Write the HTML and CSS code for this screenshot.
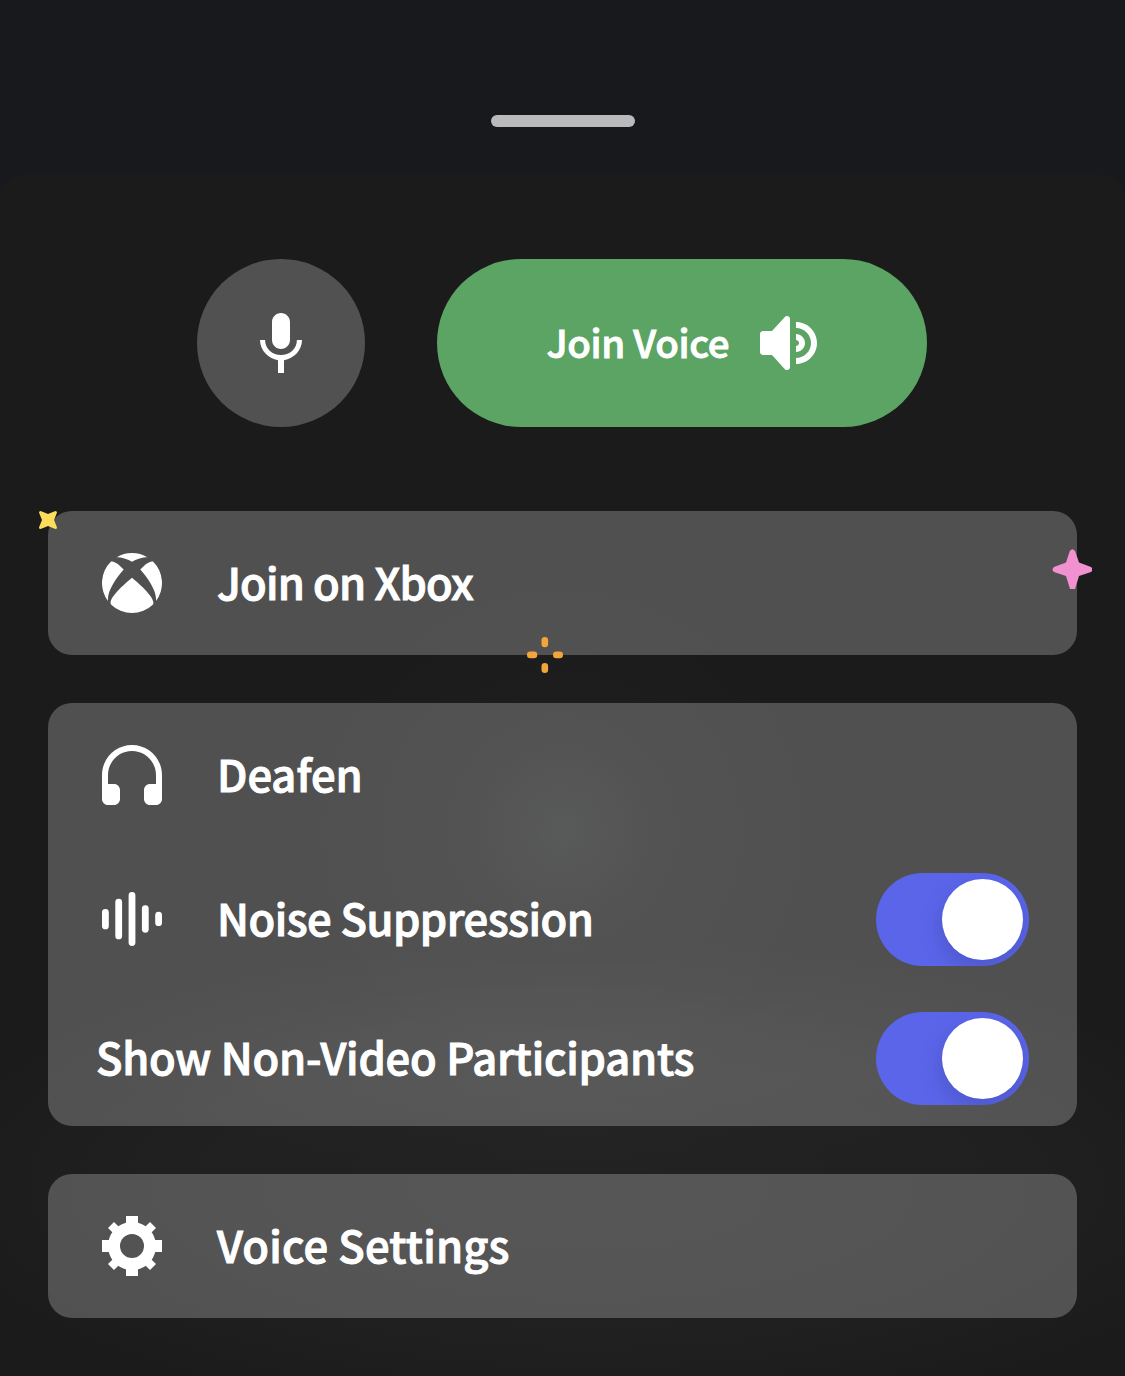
FILE: index.html
```html
<!DOCTYPE html>
<html lang="en">
<head>
<meta charset="utf-8">
<title>Voice</title>
<link rel="stylesheet" href="styles.css">
</head>
<body>
<div class="grabber-area"><div class="grabber"></div></div>
<main class="sheet">
  <div class="actions">
    <button class="mic" aria-label="Mute">
      <svg class="icon" viewBox="0 0 24 24"><path d="M12 14c1.66 0 3-1.34 3-3V5c0-1.66-1.34-3-3-3S9 3.340 9 5v6c0 1.660 1.340 3 3 3zm5.300-3c0 3-2.540 5-5.300 5S6.700 14 6.700 11H5c0 3.410 2.720 6.230 6 6.720V22h2v-4.280c3.280-.48 6-3.300 6-6.720h-1.700z"/></svg>
    </button>
    <button class="join">
      <span class="join-label">Join Voice</span>
      <svg class="icon" viewBox="0 0 24 24"><path d="M11.383 3.079C11.009 2.925 10.579 3.010 10.293 3.296L6 8.002H3C2.450 8.002 2 8.453 2 9.002V15.002C2 15.552 2.450 16.002 3 16.002H6L10.293 20.710C10.579 20.996 11.009 21.082 11.383 20.927C11.757 20.772 12 20.407 12 20.002V4.002C12 3.599 11.757 3.232 11.383 3.079ZM14 5.002V7.002C16.757 7.002 19 9.246 19 12.002C19 14.759 16.757 17.002 14 17.002V19.002C17.860 19.002 21 15.863 21 12.002C21 8.143 17.860 5.002 14 5.002ZM14 9.002C15.654 9.002 17 10.349 17 12.002C17 13.657 15.654 15.002 14 15.002V13.002C14.551 13.002 15 12.553 15 12.002C15 11.451 14.551 11.002 14 11.002V9.002Z"/></svg>
    </button>
  </div>

  <section class="card promo">
    <div class="row">
      <svg class="icon" viewBox="-6 -6 72 72"><path d="M14.300 4.400A30 30 0 0 1 45.700 4.400C41 3.500 35 6 30 8.700C25 6 19 3.500 14.300 4.400ZM9 8.600C12 7.500 17 11.500 21.700 16.400C14 25 5 38 6 48A30 30 0 0 1 9 8.600ZM51 8.600C48 7.500 43 11.500 38.300 16.400C46 25 55 38 54 48A30 30 0 0 0 51 8.600ZM30 24.700C40 33 54 46 51 51.400A30 30 0 0 1 9 51.400C6 46 20 33 30 24.700Z"/></svg>
      <span class="label t-xbox">Join on Xbox</span>
    </div>
    <svg class="spark spark-yellow" viewBox="0 0 18 18"><path d="M1.500 0Q5.500 1.500 9 3Q12.500 1.500 16.500 0Q18 0 18 1.500Q16.500 5.500 15 9Q16.500 12.500 18 16.500Q18 18 16.500 18Q12.500 16.500 9 15Q5.500 16.500 1.500 18Q0 18 0 16.500Q1.500 12.500 3 9Q1.500 5.500 0 1.500Q0 0 1.500 0Z"/></svg>
    <svg class="spark spark-pink" viewBox="0 0 40 40"><path d="M17.800 2Q20.500-1.600 23 2L27 13.500L39 18Q42 20.500 39 23L27 27L23 40H18L14 27L2 23Q-1 20.500 2 18L14 13.500Z"/></svg>
    <svg class="spark spark-orange" viewBox="0 0 36 36"><rect x="14.500" y="0" width="6.600" height="10.300" rx="3.300"/><rect x="14.500" y="26" width="6.600" height="10" rx="3.300"/><rect x="0" y="14.600" width="10.300" height="6.600" rx="3.300"/><rect x="26" y="14.600" width="10" height="6.600" rx="3.300"/></svg>
  </section>

  <section class="card">
    <div class="row">
      <svg class="icon" viewBox="0 0 24 24"><path d="M12 2C6.486 2 2 6.485 2 12V20C2 21.104 2.895 22 4 22H6C7.104 22 8 21.104 8 20V17C8 15.896 7.104 15 6 15H4V12C4 7.588 7.589 4 12 4C16.411 4 20 7.588 20 12V15H18C16.896 15 16 15.896 16 17V20C16 21.104 16.896 22 18 22H20C21.104 22 22 21.104 22 20V12C22 6.485 17.514 2 12 2Z"/></svg>
      <span class="label t-deafen">Deafen</span>
    </div>
    <div class="row">
      <svg class="icon" viewBox="0 0 72 72"><rect x="6" y="26" width="6.800" height="20.300" rx="3.400"/><rect x="19.300" y="15.700" width="6.800" height="40.600" rx="3.400"/><rect x="32.600" y="9" width="6.800" height="54" rx="3.400"/><rect x="45.900" y="22.300" width="6.800" height="27.400" rx="3.400"/><rect x="59.200" y="28.800" width="6.800" height="14.300" rx="3.400"/></svg>
      <span class="label t-noise">Noise Suppression</span>
      <span class="toggle"><span class="knob"></span></span>
    </div>
    <div class="row row-short">
      <span class="label t-show">Show Non-Video Participants</span>
      <span class="toggle"><span class="knob"></span></span>
    </div>
  </section>

  <section class="card">
    <div class="row">
      <svg class="icon" viewBox="0 0 24 24"><path fill-rule="evenodd" d="M19.738 10H22V14H19.739C19.498 14.931 19.100 15.798 18.565 16.564L20 18L18 20L16.565 18.564C15.797 19.099 14.932 19.498 14 19.738V22H10V19.738C9.069 19.498 8.203 19.099 7.436 18.564L6 20L4 18L5.436 16.564C4.901 15.799 4.502 14.932 4.262 14H2V10H4.262C4.502 9.068 4.900 8.202 5.436 7.436L4 6L6 4L7.436 5.436C8.202 4.900 9.068 4.502 10 4.262V2H14V4.261C14.932 4.502 15.797 4.900 16.565 5.435L18 3.999L20 5.999L18.564 7.436C19.099 8.202 19.498 9.069 19.738 10ZM12 16A4 4 0 1 0 12 8A4 4 0 1 0 12 16Z"/></svg>
      <span class="label t-settings">Voice Settings</span>
    </div>
  </section>
</main>
</body>
</html>
```
FILE: styles.css
```css
* { box-sizing: border-box; }

body {
  margin: 0;
  width: 1125px;
  height: 1376px;
  display: flex;
  flex-direction: column;
  overflow: hidden;
  background: #18191c;
  color: #fff;
  font-family: "Noto Sans CJK SC", "Noto Sans", sans-serif;
  font-weight: 500;
}

.grabber-area {
  height: 175px;
  padding-top: 115px;
  display: flex;
  justify-content: center;
}

.grabber {
  width: 144px;
  height: 12px;
  border-radius: 6px;
  background: #bababc;
}

.sheet {
  flex: 1;
  display: flex;
  flex-direction: column;
  gap: 48px;
  padding: 84px 48px 0;
  border-radius: 24px 24px 0 0;
  background:
    radial-gradient(circle 120px at 562px 655px, rgba(225, 235, 255, 0.035), rgba(225, 235, 255, 0) 100%),
    radial-gradient(circle 270px at 562px 655px, rgba(215, 235, 255, 0.02), rgba(215, 235, 255, 0) 100%),
    radial-gradient(ellipse 480px 110px at 562px 890px, rgba(245, 250, 255, 0.025), rgba(245, 250, 255, 0) 100%),
    radial-gradient(ellipse 700px 250px at 590px 1010px, rgba(235, 245, 255, 0.035), rgba(235, 245, 255, 0.022) 60%, rgba(235, 245, 255, 0) 100%),
    #1b1b1b;
}

.actions {
  display: flex;
  justify-content: center;
  gap: 72px;
  height: 168px;
  margin-bottom: 36px;
  padding-right: 1px;
}

.mic,
.join {
  border: 0;
  padding: 0;
  height: 168px;
  border-radius: 84px;
  display: flex;
  align-items: center;
  justify-content: center;
  color: #fff;
  font: inherit;
}

.mic { width: 168px; background: #515151; }

.join {
  width: 490px;
  gap: 24px;
  background: #5ca464;
}

.join-label {
  margin: 0 0.3px 0 8px;
  padding-bottom: 5px;
  font-size: 38.5px;
  line-height: 60px;
  letter-spacing: -0.35px;
  white-space: nowrap;
  -webkit-text-stroke: 0.9px #fff;
}

.icon {
  flex: none;
  width: 72px;
  height: 72px;
  fill: #fff;
}

.card {
  position: relative;
  border-radius: 24px;
  background: rgba(255, 255, 255, 0.235);
}

.row {
  height: 144px;
  padding: 0 48px;
  display: flex;
  align-items: center;
}

.row-short { height: 135px; }

.label {
  padding-bottom: 3px;
  font-size: 43.5px;
  line-height: 64px;
  white-space: nowrap;
  -webkit-text-stroke: 1px #fff;
}

.icon + .label { margin-left: 49px; }

.t-xbox { letter-spacing: -0.8px; }
.t-deafen { letter-spacing: 0; }
.t-noise { letter-spacing: -0.5px; }
.t-show { letter-spacing: -0.2px; }
.t-settings { letter-spacing: 0.2px; }

.toggle {
  flex: none;
  display: flex;
  justify-content: flex-end;
  width: 153px;
  height: 93px;
  margin-left: auto;
  padding: 6px;
  border-radius: 46.5px;
  background: #5a65ea;
  overflow: hidden;
}

.knob {
  width: 81px;
  height: 81px;
  border-radius: 50%;
  background: #fff;
  box-shadow: 0 9px 24px rgba(0, 0, 0, 0.15);
}

.spark { position: absolute; }
.spark-yellow { left: -9px; top: 0; width: 18px; height: 18px; fill: #fbdd5b; }
.spark-pink { right: -15px; top: 38px; width: 40px; height: 40px; fill: #f291d0; }
.spark-orange { left: 479px; top: 126px; width: 36px; height: 36px; fill: #f3a43b; }
```
